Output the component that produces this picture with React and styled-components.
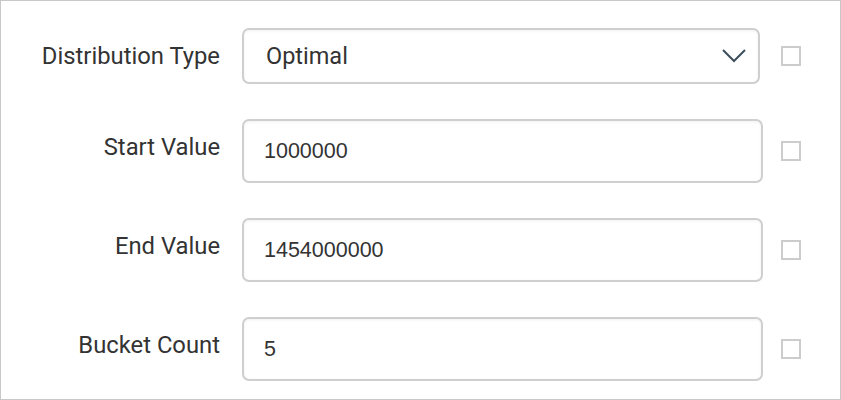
import React from "react";
import styled, { createGlobalStyle } from "styled-components";

const Global = createGlobalStyle`
  html, body { margin: 0; padding: 0; background: #fff; }
  * { box-sizing: border-box; }
`;

const Panel = styled.div`
  width: 841px;
  height: 400px;
  border: 1px solid #c8c8c8;
  background: #fff;
  padding: 27px 0 0 0;
  display: flex;
  flex-direction: column;
  font-family: Roboto, "Liberation Sans", sans-serif;
`;

const Row = styled.div`
  display: grid;
  grid-template-columns: 219px 543px 59px;
  align-items: center;
  height: ${(p) => p.$h}px;
  margin-bottom: ${(p) => p.$mb}px;
`;

const Label = styled.label`
  text-align: right;
  font-size: 23.8px;
  color: #333;
  white-space: nowrap;
  margin-bottom: ${(p) => p.$lift}px;
`;

const Control = styled.div`
  margin-left: 22px;
  height: 100%;
  width: ${(p) => p.$w}px;
  border: 2px solid #cfcfcf;
  border-radius: 7px;
  background: #fff;
  box-shadow: inset 0 1px 3px rgba(0, 0, 0, 0.06);
  display: flex;
  align-items: center;
  justify-content: space-between;
  padding: 0 12px 0 ${(p) => p.$pl}px;
`;

const SelectText = styled.span`
  font-family: Roboto, sans-serif;
  font-size: 23.5px;
  color: #333;
`;

const InputText = styled.span`
  font-family: "Liberation Sans", Arial, sans-serif;
  font-size: 21.5px;
  color: #333;
`;

const Check = styled.div`
  margin-left: 18px;
  width: 20px;
  height: 20px;
  border: 2px solid #cccccc;
  background: #fff;
`;

const Chevron = () => (
  <svg width="24" height="14" viewBox="0 0 24 14" fill="none">
    <path d="M1 1 L12 12 L23 1" stroke="#3d4f5c" strokeWidth="2" />
  </svg>
);

const rows = [
  { label: "Distribution Type", value: "Optimal", select: true, h: 56, mb: 35 },
  { label: "Start Value", value: "1000000", h: 64, mb: 35 },
  { label: "End Value", value: "1454000000", h: 64, mb: 35 },
  { label: "Bucket Count", value: "5", h: 64, mb: 0 },
];

export default function App() {
  return (
    <>
      <Global />
      <Panel>
        {rows.map((r) => (
          <Row key={r.label} $h={r.h} $mb={r.mb}>
            <Label $lift={r.select ? 0 : 8}>{r.label}</Label>
            <Control $w={r.select ? 518 : 521} $pl={r.select ? 22 : 20}>
              {r.select ? (
                <>
                  <SelectText>{r.value}</SelectText>
                  <Chevron />
                </>
              ) : (
                <InputText>{r.value}</InputText>
              )}
            </Control>
            <Check />
          </Row>
        ))}
      </Panel>
    </>
  );
}
